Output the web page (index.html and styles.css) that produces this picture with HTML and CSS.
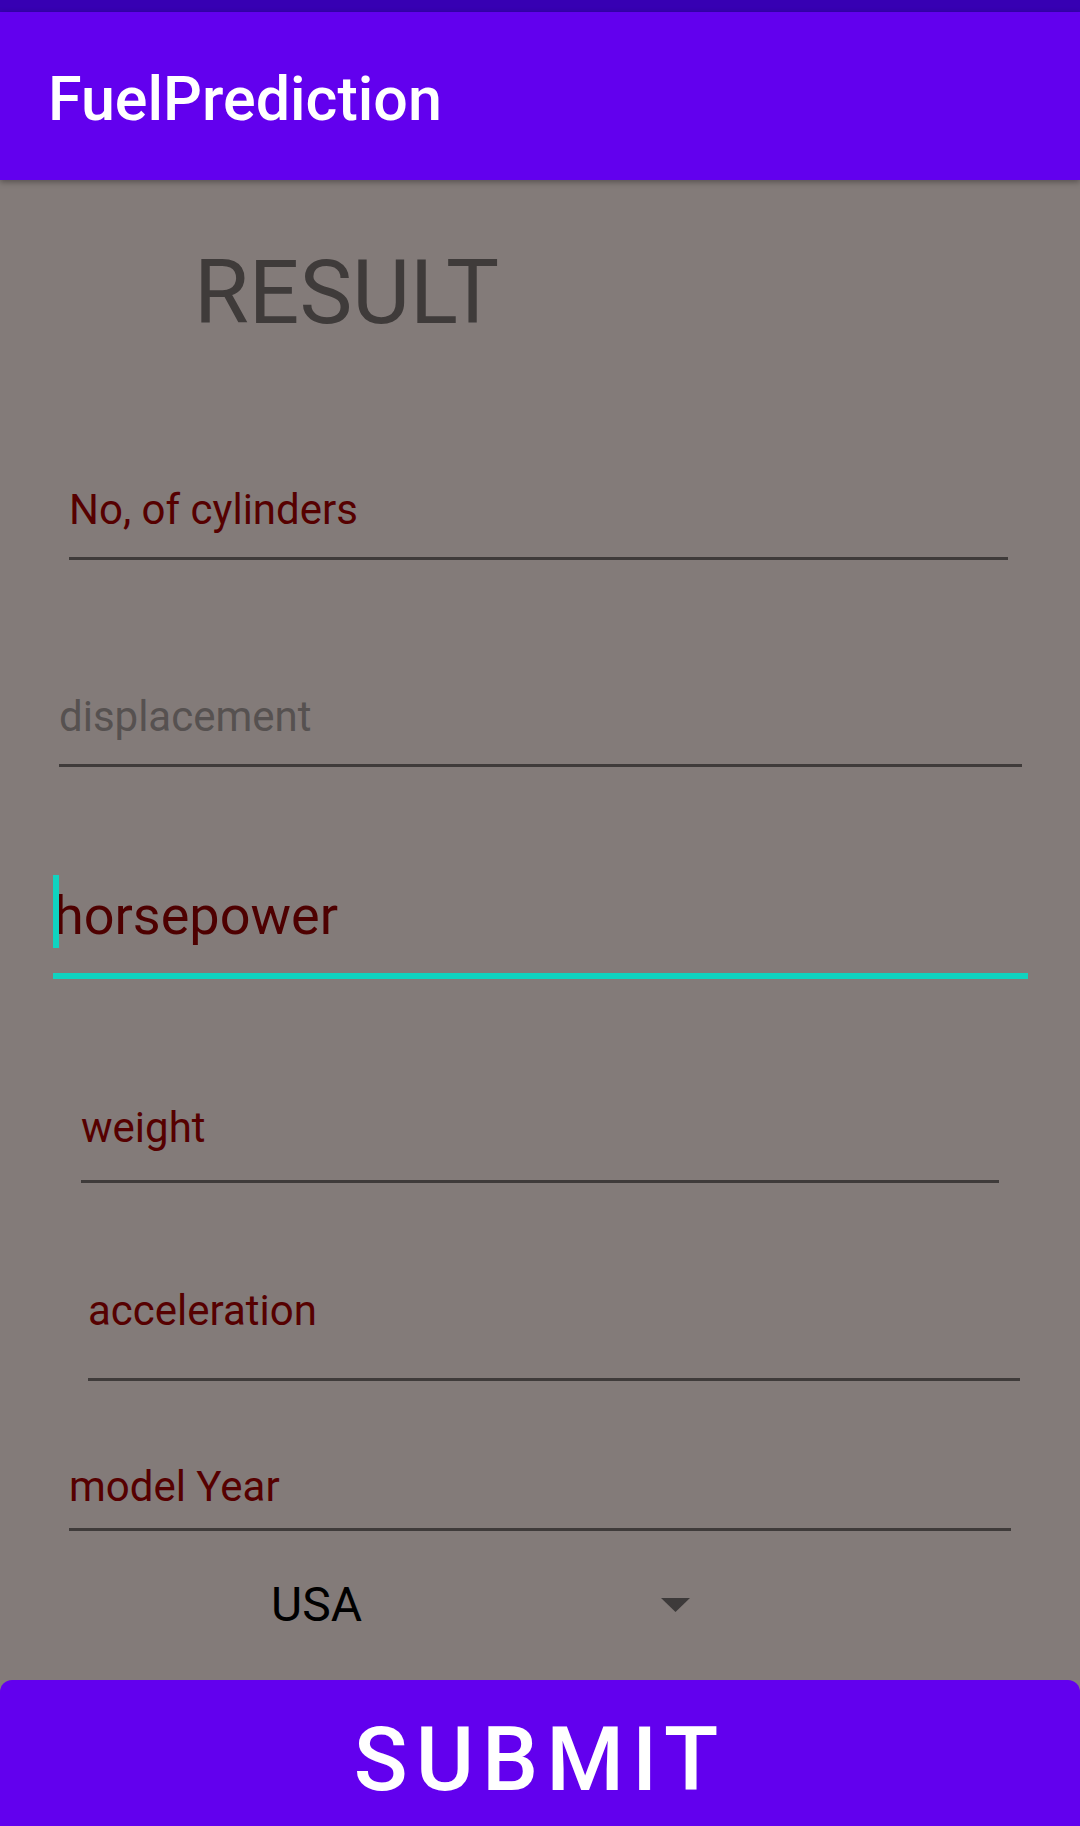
FILE: index.html
```html
<!DOCTYPE html>
<html>
<head>
<meta charset="utf-8">
<link rel="stylesheet" href="styles.css">
</head>
<body>
<div class="screen">
  <div class="status"></div>
  <header class="appbar"><span class="title">FuelPrediction</span></header>
  <main class="content">
    <div class="result">RESULT</div>
    <div class="field f-cyl">No, of cylinders</div>
    <div class="field f-disp hint">displacement</div>
    <div class="field f-hp focused"><span class="cursor"></span><span class="hp-text">horsepower</span></div>
    <div class="field f-weight">weight</div>
    <div class="field f-acc">acceleration</div>
    <div class="field f-year">model Year</div>
    <div class="spinner">
      <span class="spinner-text">USA</span>
      <svg class="arrow" width="29" height="14" viewBox="0 0 29 14"><path d="M0 0 L29 0 L14.5 14 Z" fill="#3d3a3a"/></svg>
    </div>
    <div class="submit" role="button">SUBMIT</div>
  </main>
</div>
</body>
</html>
```

FILE: styles.css
```css
html, body {
  margin: 0;
  padding: 0;
  width: 1080px;
  height: 1826px;
  overflow: hidden;
  background: #837b79;
  font-family: Roboto, "Noto Sans", sans-serif;
}
.screen {
  width: 1080px;
  height: 1826px;
  overflow: hidden;
  display: flex;
  flex-direction: column;
}
.status {
  height: 12px;
  background: #3700b3;
  flex: none;
}
.appbar {
  height: 168px;
  flex: none;
  background: #6200ee;
  box-sizing: border-box;
  padding: 56px 0 0 48px;
  box-shadow: 0 2px 6px rgba(0, 0, 0, 0.35);
  position: relative;
  z-index: 1;
}
.title {
  display: block;
  color: #ffffff;
  font-size: 61px;
  line-height: 62px;
  font-weight: 500;
}
.content {
  display: flex;
  flex-direction: column;
  align-items: flex-start;
}
.result {
  margin: 68px 0 0 194px;
  font-size: 89px;
  line-height: 90px;
  color: #3f3b3a;
}
.field {
  box-sizing: content-box;
  color: #560000;
  border-bottom: 3px solid #3f3b3a;
}
.hint { color: #565150; }
.f-cyl {
  margin: 151px 0 0 69px;
  width: 939px;
  font-size: 42px;
  line-height: 42px;
  padding-bottom: 26px;
}
.f-disp {
  margin: 136px 0 0 59px;
  width: 963px;
  font-size: 42px;
  line-height: 42px;
  padding-bottom: 26px;
}
.f-hp {
  margin: 122px 0 0 53px;
  width: 975px;
  font-size: 54px;
  line-height: 54px;
  padding-bottom: 30px;
  border-bottom: 6px solid #10d3c0;
  position: relative;
  color: #4e0000;
}
.hp-text { padding-left: 1px; }
.cursor {
  position: absolute;
  left: 0;
  top: -14px;
  width: 6px;
  height: 73px;
  background: #10d3c0;
}
.f-weight {
  margin: 128px 0 0 81px;
  width: 918px;
  font-size: 42px;
  line-height: 42px;
  padding-bottom: 31px;
}
.f-acc {
  margin: 107px 0 0 88px;
  width: 932px;
  font-size: 42px;
  line-height: 42px;
  padding-bottom: 46px;
}
.f-year {
  margin: 85px 0 0 69px;
  width: 942px;
  font-size: 42px;
  line-height: 42px;
  padding-bottom: 20px;
}
.spinner {
  margin: 50px 0 0 271px;
  width: 419px;
  height: 48px;
  display: flex;
  align-items: center;
  justify-content: space-between;
}
.spinner-text {
  font-size: 48px;
  line-height: 48px;
  color: #000000;
}
.arrow { display: block; }
.submit {
  margin: 51px 0 0 0;
  width: 1080px;
  height: 170px;
  flex: none;
  border-radius: 12px;
  background: #6200ee;
  color: #ffffff;
  font-size: 89px;
  font-weight: 500;
  letter-spacing: 0.09em;
  line-height: 90px;
  padding: 35px 0 0 0;
  text-align: center;
  box-sizing: border-box;
}
```
